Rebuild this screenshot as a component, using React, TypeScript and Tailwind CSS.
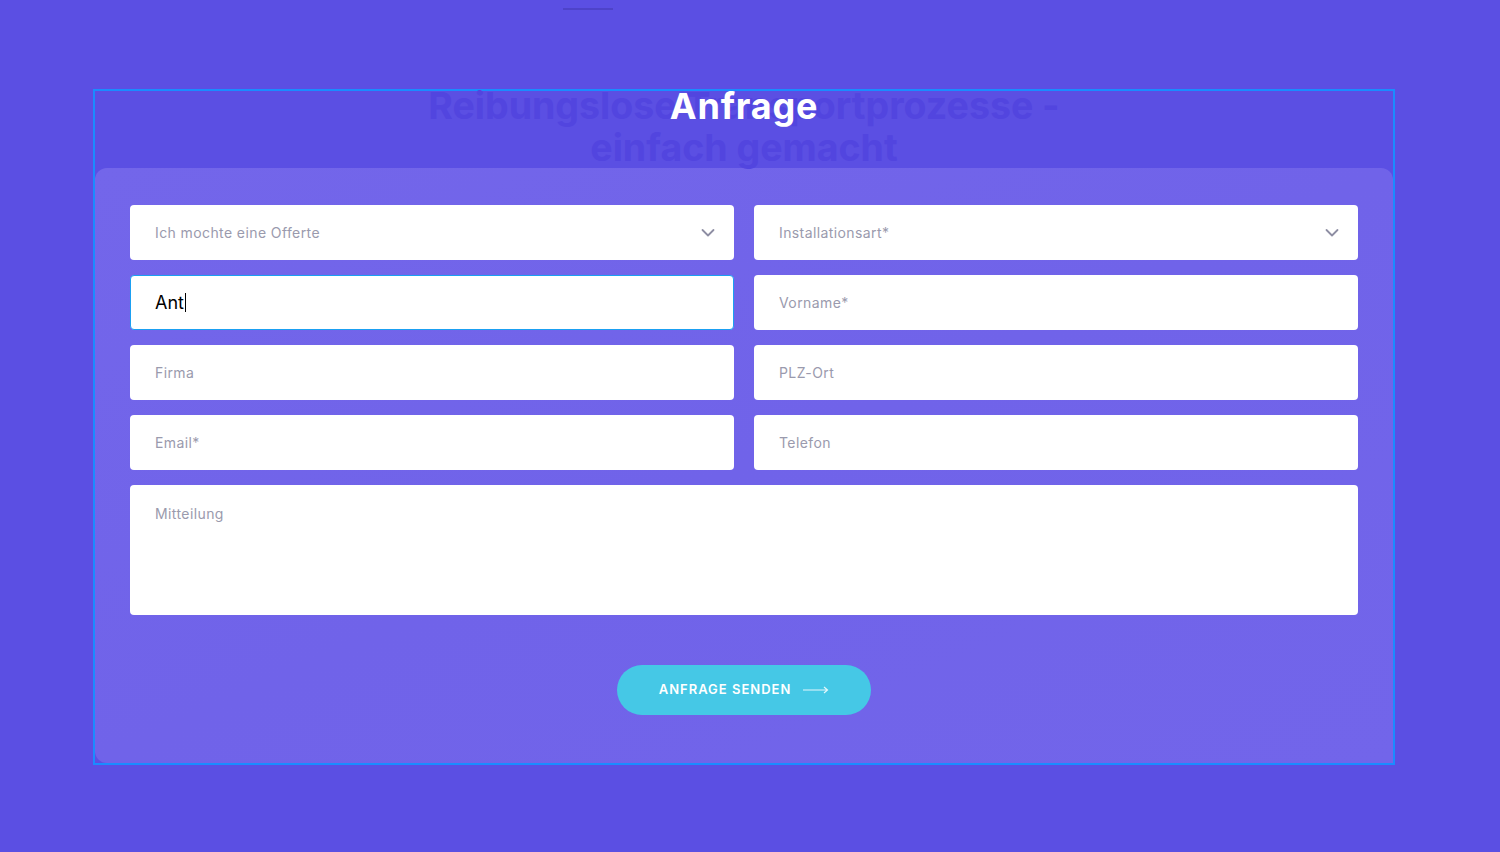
import React from 'react';

const font = { fontFamily: 'Inter, "Noto Sans", sans-serif' };

const Chevron: React.FC = () => (
  <svg width="14" height="9" viewBox="0 0 14 9" fill="none" className="absolute right-[19px] top-1/2 -translate-y-1/2">
    <path d="M1.5 1.5L7 7L12.5 1.5" stroke="#8e8ea3" strokeWidth="1.8" strokeLinecap="round" strokeLinejoin="round" />
  </svg>
);

const SelectField: React.FC<{ label: string }> = ({ label }) => (
  <div className="relative flex h-[55px] items-center rounded-[4px] bg-white pl-[25px] text-[14px] tracking-[0.4px] text-[#9a9aad]">
    {label}
    <Chevron />
  </div>
);

const TextField: React.FC<{ placeholder: string }> = ({ placeholder }) => (
  <input
    placeholder={placeholder}
    className="h-[55px] w-full rounded-[4px] bg-white px-[25px] text-[14px] tracking-[0.4px] text-black outline-none placeholder:text-[#9a9aad]"
    style={font}
  />
);

export default function App() {
  return (
    <div className="min-h-[852px] w-full bg-[#5b4fe3] pt-[8px]" style={font}>
      <div className="ml-[563px] h-[2px] w-[50px] bg-[#4e43c9]" />
      <div className="ml-[93px] mt-[79px] w-[1302px] border-2 border-[#1a8cff]">
        <div className="relative flex h-[77px] justify-center">
          <div className="pointer-events-none absolute left-0 right-0 top-[-6px] text-center text-[37.5px] font-bold leading-[42px] text-[#5245df]">
            Reibungslose Transportprozesse -<br />einfach gemacht
          </div>
          <h2 className="relative mt-[-3px] text-[36px] font-bold leading-[36px] tracking-[0.8px] text-white">Anfrage</h2>
        </div>
        <div className="rounded-t-[12px] rounded-bl-[12px] bg-gradient-to-br from-[#7366ea] via-[#7063e9] to-[#7265ea] px-[35px] pb-[48px] pt-[37px]">
          <div className="grid grid-cols-2 gap-x-[20px] gap-y-[15px]">
            <SelectField label="Ich mochte eine Offerte" />
            <SelectField label="Installationsart*" />
            <div className="flex h-[55px] items-center rounded-[4px] border-[1.5px] border-[#1ba0f2] bg-white pl-[24px] text-[18px] text-black">
              Ant<span className="ml-[1px] inline-block h-[19px] w-[1px] bg-black" />
            </div>
            <TextField placeholder="Vorname*" />
            <TextField placeholder="Firma" />
            <TextField placeholder="PLZ-Ort" />
            <TextField placeholder="Email*" />
            <TextField placeholder="Telefon" />
            <textarea
              placeholder="Mitteilung"
              className="col-span-2 h-[130px] resize-none rounded-[4px] bg-white px-[25px] pt-[18px] text-[14px] tracking-[0.4px] outline-none placeholder:text-[#9a9aad]"
              style={font}
            />
          </div>
          <div className="mt-[50px] flex justify-center">
            <button className="flex h-[50px] w-[254px] items-center justify-center gap-[12px] rounded-full bg-[#45c8e6] text-[13px] font-semibold tracking-[1px] text-white">
              ANFRAGE SENDEN
              <svg width="26" height="8" viewBox="0 0 26 8" fill="none">
                <path d="M0 4H24M21 1L24.5 4L21 7" stroke="white" strokeWidth="1.2" strokeOpacity="0.85" />
              </svg>
            </button>
          </div>
        </div>
      </div>
    </div>
  );
}
